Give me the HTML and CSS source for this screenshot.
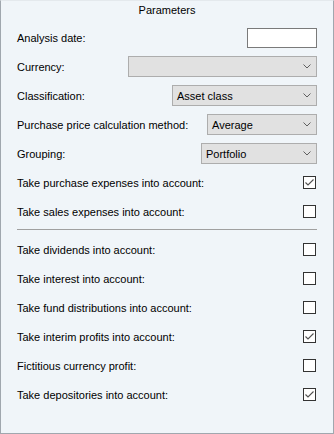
FILE: index.html
```html
<!DOCTYPE html>
<html lang="en">
<head>
    <meta charset="UTF-8">
    <title>Parameters</title>
    <link rel="stylesheet" href="styles.css">
</head>
<body>
<div class="panel">
    <div class="title">Parameters</div>

    <div class="row">
        <span class="label">Analysis date:</span>
        <span class="field"></span>
    </div>
    <div class="row">
        <span class="label">Currency:</span>
        <div class="combo w-currency">
            <span class="value"></span>
            <svg class="arrow" width="8" height="5" viewBox="0 0 8 5"><path d="M0.5 0.5 L4 4 L7.5 0.5" fill="none" stroke="#5f5f5f" stroke-width="1"/></svg>
        </div>
    </div>
    <div class="row">
        <span class="label">Classification:</span>
        <div class="combo w-class">
            <span class="value">Asset class</span>
            <svg class="arrow" width="8" height="5" viewBox="0 0 8 5"><path d="M0.5 0.5 L4 4 L7.5 0.5" fill="none" stroke="#5f5f5f" stroke-width="1"/></svg>
        </div>
    </div>
    <div class="row">
        <span class="label">Purchase price calculation method:</span>
        <div class="combo w-method">
            <span class="value">Average</span>
            <svg class="arrow" width="8" height="5" viewBox="0 0 8 5"><path d="M0.5 0.5 L4 4 L7.5 0.5" fill="none" stroke="#5f5f5f" stroke-width="1"/></svg>
        </div>
    </div>
    <div class="row">
        <span class="label">Grouping:</span>
        <div class="combo w-group">
            <span class="value">Portfolio</span>
            <svg class="arrow" width="8" height="5" viewBox="0 0 8 5"><path d="M0.5 0.5 L4 4 L7.5 0.5" fill="none" stroke="#5f5f5f" stroke-width="1"/></svg>
        </div>
    </div>
    <div class="row">
        <span class="label">Take purchase expenses into account:</span>
        <span class="check checked"><svg width="11" height="11" viewBox="0 0 11 11"><path d="M1.5 5.5 L4 8 L9.5 2.5" fill="none" stroke="#505050" stroke-width="1.1"/></svg></span>
    </div>
    <div class="row">
        <span class="label">Take sales expenses into account:</span>
        <span class="check"></span>
    </div>

    <div class="separator"></div>

    <div class="row">
        <span class="label">Take dividends into account:</span>
        <span class="check"></span>
    </div>
    <div class="row">
        <span class="label">Take interest into account:</span>
        <span class="check"></span>
    </div>
    <div class="row">
        <span class="label">Take fund distributions into account:</span>
        <span class="check"></span>
    </div>
    <div class="row">
        <span class="label">Take interim profits into account:</span>
        <span class="check checked"><svg width="11" height="11" viewBox="0 0 11 11"><path d="M1.5 5.5 L4 8 L9.5 2.5" fill="none" stroke="#505050" stroke-width="1.1"/></svg></span>
    </div>
    <div class="row">
        <span class="label">Fictitious currency profit:</span>
        <span class="check"></span>
    </div>
    <div class="row">
        <span class="label">Take depositories into account:</span>
        <span class="check checked"><svg width="11" height="11" viewBox="0 0 11 11"><path d="M1.5 5.5 L4 8 L9.5 2.5" fill="none" stroke="#505050" stroke-width="1.1"/></svg></span>
    </div>
</div>
</body>
</html>
```

FILE: styles.css
```css
*{
    margin: 0;
    padding: 0;
    box-sizing: border-box;
}
body{
    font-family: "Liberation Sans", Arial, sans-serif;
    font-size: 11px;
    color: #000;
    background-color: #f0f5f9;
}
.panel{
    width: 334px;
    height: 434px;
    background-color: #f0f5f9;
    border: 1px solid #a0a7ae;
    border-top-color: #e4e9ed;
    padding: 0 16px;
}
.title{
    height: 22px;
    line-height: 18px;
    text-align: center;
}
.row{
    height: 29px;
    display: flex;
    align-items: center;
    justify-content: space-between;
}
/*日期输入框*/
.field{
    width: 70px;
    height: 20px;
    background-color: #fff;
    border: 1px solid #7a7a7a;
}
/*下拉框*/
.combo{
    height: 21px;
    display: flex;
    align-items: center;
    justify-content: space-between;
    background-color: #e1e1e1;
    border: 1px solid #adadad;
    padding: 0 5px 0 4px;
}
.combo .arrow{
    display: block;
}
.w-currency{
    width: 189px;
}
.w-class{
    width: 145px;
}
.w-method{
    width: 110px;
}
.w-group{
    width: 116px;
}
.check{
    width: 13px;
    height: 13px;
    background-color: #fff;
    border: 1px solid #333;
    margin-right: 1px;
}
.check svg{
    display: block;
}
.separator{
    height: 1px;
    background-color: #a0a0a0;
    margin: 3px 0 5px;
}
```
